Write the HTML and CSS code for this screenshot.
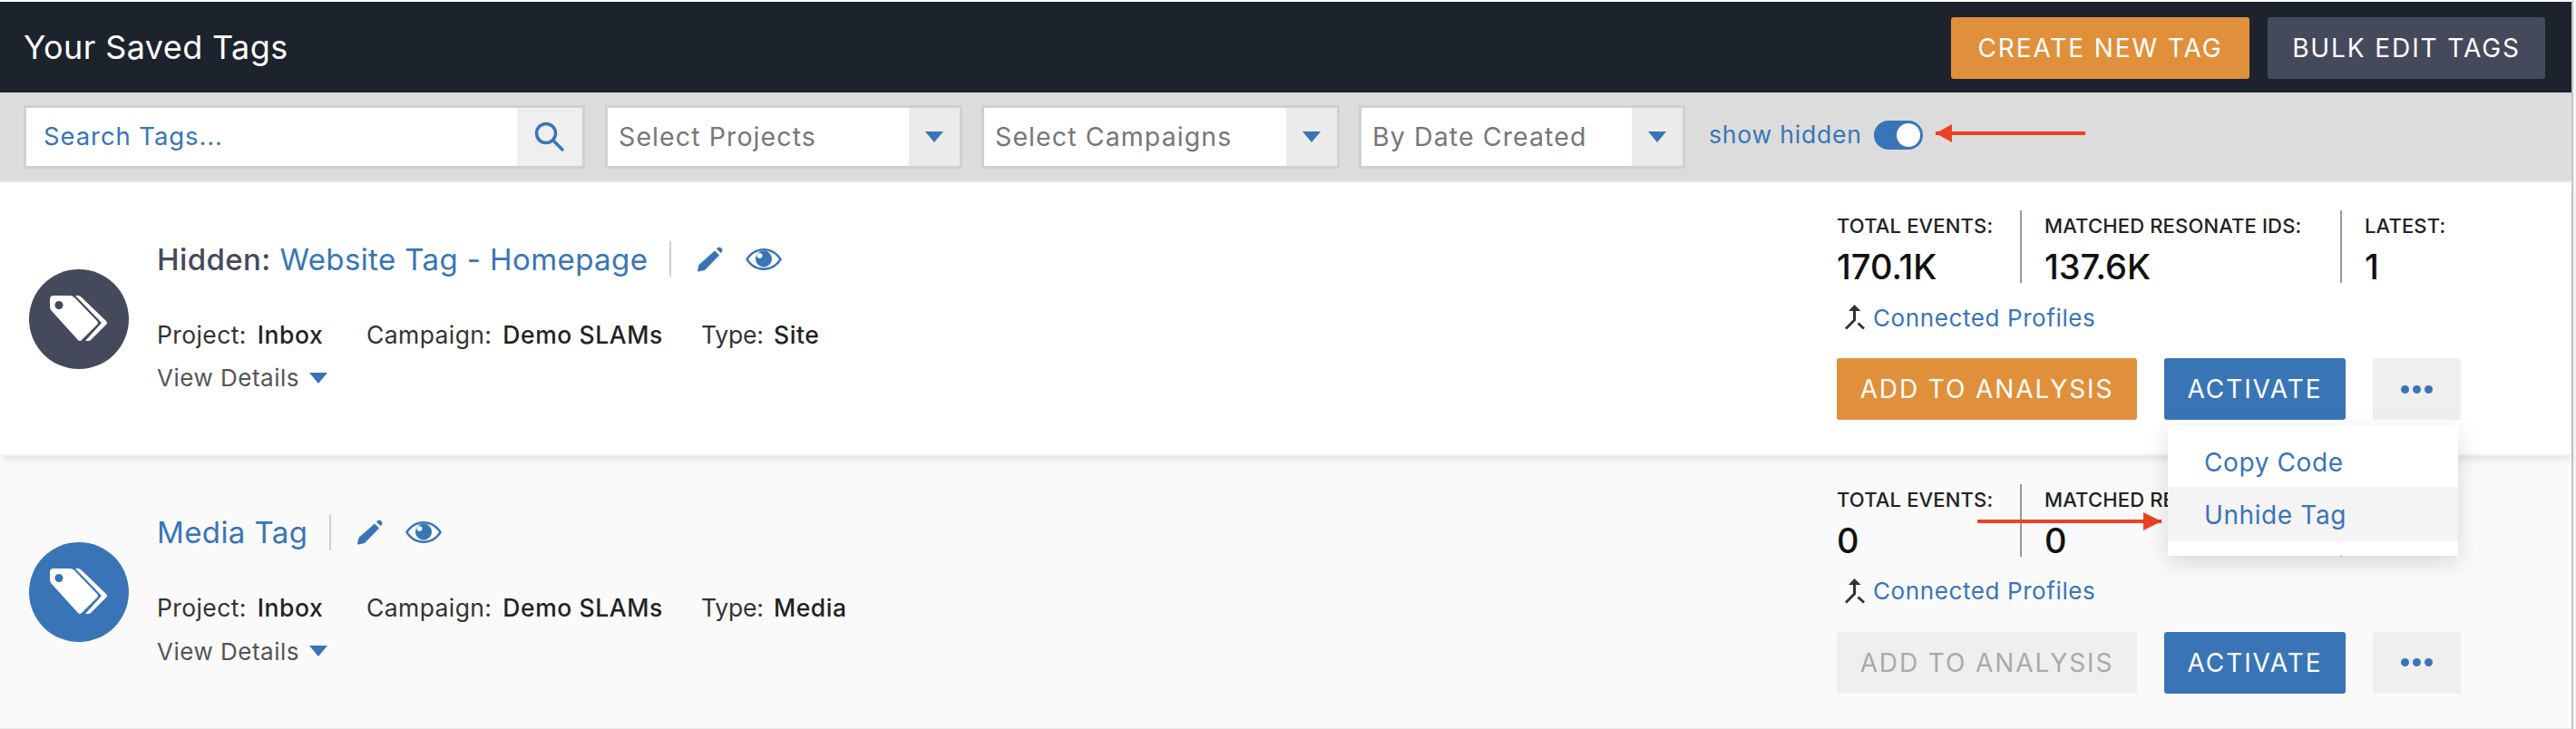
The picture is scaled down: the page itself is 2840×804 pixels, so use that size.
FILE: index.html
```html
<!DOCTYPE html>
<html lang="en">
<head>
<meta charset="utf-8">
<title>Your Saved Tags</title>
<link rel="stylesheet" href="styles.css">
</head>
<body>
<svg class="defs" width="0" height="0" aria-hidden="true">
  <symbol id="tags" viewBox="0 0 110 110">
    <path fill="#fff" fill-rule="evenodd" d="M27 29h18q3 0 5 2l25 26q2 2 0 4L58 78q-2 2-4 0L25 46q-2-2-2-5V33q0-4 4-4zM33 35a4.500 4.500 0 1 0 .01 0z"/>
    <path fill="#fff" d="M51 29h3q2 0 4 2l27 26q2 2 0 4L68 78q-1 1-3 1h-3l18-20z"/>
  </symbol>
  <symbol id="pencil" viewBox="0 0 28 28">
    <path fill="#3975b6" d="M19 4.500l5 5L8 26l-7 1.500q-1 0-1-1L1.500 20zM21 2.500l1.500-1.500q1.500-1 3 0l1.500 1.500q1 1.500 0 3l-1.500 1.500z"/>
  </symbol>
  <symbol id="eye" viewBox="0 0 40 24">
    <path fill="#3975b6" fill-rule="evenodd" d="M20 0C29 0 36 5 40 12 36 19 29 24 20 24S4 19 0 12C4 5 11 0 20 0zM20 2.500C12.500 2.500 6.500 6.500 3 12 6.500 17.500 12.500 21.500 20 21.500S33.500 17.500 37 12C33.500 6.500 27.500 2.500 20 2.500z"/>
    <path fill="#3975b6" fill-rule="evenodd" d="M20 2.500a9 9 0 1 1-.01 0zM15.500 5a3 3 0 1 0 .01 0z"/>
  </symbol>
  <symbol id="merge" viewBox="0 0 22 28">
    <path fill="#333" d="M10.500 0L17.500 7H4z"/>
    <path fill="none" stroke="#333" stroke-width="3" d="M10.500 6v11L1 26.500M14.500 20.500L21 26.500"/>
  </symbol>
  <symbol id="search" viewBox="0 0 34 34">
    <circle cx="13" cy="13" r="10.500" fill="none" stroke="#3975b6" stroke-width="3.500"/>
    <path stroke="#3975b6" stroke-width="3.500" stroke-linecap="round" d="M21 21l10 10"/>
  </symbol>
</svg>
<div class="page">
  <header class="topbar">
    <h1 class="page-title">Your Saved Tags</h1>
    <div class="top-actions">
      <button class="btn btn-orange btn-create">CREATE NEW TAG</button>
      <button class="btn btn-slate btn-bulk">BULK EDIT TAGS</button>
    </div>
  </header>
  <div class="filters">
    <div class="field field-search"><span class="field-text search-text">Search Tags...</span><span class="field-addon addon-search"><svg class="icon-search"><use href="#search"/></svg></span></div>
    <div class="field field-projects"><span class="field-text">Select Projects</span><span class="field-addon"><i class="caret"></i></span></div>
    <div class="field field-campaigns"><span class="field-text">Select Campaigns</span><span class="field-addon"><i class="caret"></i></span></div>
    <div class="field field-date"><span class="field-text">By Date Created</span><span class="field-addon"><i class="caret"></i></span></div>
    <span class="show-hidden">show hidden</span>
    <span class="toggle"><i class="knob"></i></span>
    <span class="arrow arrow-left"></span>
  </div>

  <section class="row row-first">
    <span class="badge badge-slate"><svg class="icon-tags"><use href="#tags"/></svg></span>
    <div class="info">
      <div class="title-line">
        <h2 class="tag-title"><span class="hidden-label">Hidden:</span> <a class="link">Website Tag - Homepage</a></h2>
        <span class="title-sep"></span>
        <svg class="icon-pencil"><use href="#pencil"/></svg>
        <svg class="icon-eye"><use href="#eye"/></svg>
      </div>
      <div class="meta">
        <span class="meta-item meta-project">Project: <b>Inbox</b></span>
        <span class="meta-item meta-campaign">Campaign: <b>Demo SLAMs</b></span>
        <span class="meta-item meta-type">Type: <b>Site</b></span>
      </div>
      <div class="details">View Details <i class="caret"></i></div>
    </div>
    <div class="side">
      <div class="stats">
        <div class="stat stat-total"><div class="stat-label">TOTAL EVENTS:</div><div class="stat-value">170.1K</div></div>
        <div class="stat stat-matched"><div class="stat-label">MATCHED RESONATE IDS:</div><div class="stat-value">137.6K</div></div>
        <div class="stat stat-latest"><div class="stat-label">LATEST:</div><div class="stat-value">1</div></div>
      </div>
      <div class="connected"><svg class="icon-merge"><use href="#merge"/></svg><a class="link">Connected Profiles</a></div>
      <div class="actions">
        <button class="btn btn-orange btn-add">ADD TO ANALYSIS</button>
        <button class="btn btn-blue btn-activate">ACTIVATE</button>
        <button class="btn btn-more"><i></i><i></i><i></i></button>
      </div>
    </div>
    <div class="menu">
      <div class="menu-item">Copy Code</div>
      <div class="menu-item menu-active">Unhide Tag</div>
    </div>
  </section>

  <section class="row row-second">
    <span class="badge badge-blue"><svg class="icon-tags"><use href="#tags"/></svg></span>
    <div class="info">
      <div class="title-line">
        <h2 class="tag-title"><a class="link">Media Tag</a></h2>
        <span class="title-sep"></span>
        <svg class="icon-pencil"><use href="#pencil"/></svg>
        <svg class="icon-eye"><use href="#eye"/></svg>
      </div>
      <div class="meta">
        <span class="meta-item meta-project">Project: <b>Inbox</b></span>
        <span class="meta-item meta-campaign">Campaign: <b>Demo SLAMs</b></span>
        <span class="meta-item meta-type">Type: <b>Media</b></span>
      </div>
      <div class="details">View Details <i class="caret"></i></div>
    </div>
    <div class="side">
      <div class="stats">
        <div class="stat stat-total"><div class="stat-label">TOTAL EVENTS:</div><div class="stat-value">0</div></div>
        <div class="stat stat-matched"><div class="stat-label">MATCHED RESONATE IDS:</div><div class="stat-value">0</div></div>
        <div class="stat stat-latest"><div class="stat-label">LATEST:</div><div class="stat-value">0</div></div>
      </div>
      <div class="connected"><svg class="icon-merge"><use href="#merge"/></svg><a class="link">Connected Profiles</a></div>
      <div class="actions">
        <button class="btn btn-disabled btn-add">ADD TO ANALYSIS</button>
        <button class="btn btn-blue btn-activate">ACTIVATE</button>
        <button class="btn btn-more"><i></i><i></i><i></i></button>
      </div>
    </div>
    <span class="arrow arrow-right"></span>
  </section>
</div>
</body>
</html>
```
FILE: styles.css
```css
* { box-sizing: border-box; }
html, body { margin: 0; height: 804px; overflow: hidden; background: #f5f5f5; }
body { font-family: Inter, "Noto Sans", sans-serif; }
.defs { position: absolute; }
.page { width: 2837px; height: 804px; display: flex; flex-direction: column; border-top: 2px solid #fff; border-right: 2px solid #c4c4c4; }
a.link { color: #3975b6; }

.topbar { height: 100px; background: #1c232c; display: flex; align-items: center; justify-content: space-between; padding: 0 29px 0 26px; }
.page-title { margin: 0; font-size: 36px; font-weight: 400; color: #fff; letter-spacing: .4px; }
.top-actions { display: flex; gap: 20px; margin-top: 2px; }
.btn { border: 0; border-radius: 3px; height: 68px; padding: 0; font-family: inherit; font-size: 28px; font-weight: 400; color: #fff; letter-spacing: 1.900px; display: flex; align-items: center; justify-content: center; }
.btn-orange { background: #e0903b; }
.btn-slate { background: #444a5c; }
.btn-blue { background: #3975b6; }
.btn-disabled { background: #efefef; color: #aaa; }
.btn-create { width: 329px; }
.btn-bulk { width: 306px; }

.filters { height: 98px; background: #dcdcdc; display: flex; align-items: center; padding: 0 0 0 26px; position: relative; }
.field { height: 70px; border: 3px solid #d0d0d0; background: #fff; display: flex; align-items: stretch; margin-right: 21px; }
.field-search { width: 619px; margin-right: 22px; }
.field-projects { width: 394px; }
.field-campaigns { width: 395px; }
.field-date { width: 360px; margin-right: 26px; }
.field-text { flex: 1; display: flex; align-items: center; padding: 0 0 2px 12px; font-size: 28.500px; color: #777; letter-spacing: 1.100px; }
.search-text { color: #3975b6; padding-left: 19px; font-size: 27.500px; letter-spacing: .9px; }
.field-addon { width: 56px; background: #ebebeb; display: flex; align-items: center; justify-content: center; }
.addon-search { width: 72px; background: #efefef; }
.icon-search { width: 34px; height: 34px; }
.caret { display: inline-block; width: 0; height: 0; border-left: 10.500px solid transparent; border-right: 10.500px solid transparent; border-top: 12px solid #3975b6; }
.show-hidden { font-size: 26.500px; color: #3975b6; letter-spacing: .8px; margin-top: -6px; }
.toggle { width: 54px; height: 32px; margin-left: 13px; border-radius: 16px; background: #3975b6; display: flex; align-items: center; justify-content: flex-end; padding-right: 3px; margin-top: -4px; }
.knob { width: 26px; height: 26px; border-radius: 50%; background: #fff; }

.arrow { position: absolute; height: 4px; background: #ee4023; }
.arrow::after { content: ""; position: absolute; top: -8px; border-top: 10px solid transparent; border-bottom: 10px solid transparent; }
.arrow-left { left: 2134px; top: 43px; width: 165px; }
.arrow-left::after { left: 0; border-right: 18px solid #ee4023; }
.arrow-right { left: 2180px; top: 70px; width: 203px; z-index: 3; }
.arrow-right::after { right: 0; border-left: 20px solid #ee4023; }

.row { position: relative; display: flex; align-items: center; padding-left: 32px; }
.row-first { height: 303px; background: #fff; z-index: 2; box-shadow: 0 6px 8px -2px rgba(0,0,0,.09); border-top: 2px solid #f0f0f0; border-bottom: 2px solid #f0f0f0; }
.row-second { height: 301px; background: #fafafa; border-bottom: 1px solid #eaeaea; z-index: 1; }
.badge { width: 110px; height: 110px; border-radius: 50%; display: block; flex: none; }
.badge-slate { background: #444a5c; }
.badge-blue { background: #3975b6; }
.icon-tags { width: 110px; height: 110px; display: block; }

.info { margin-left: 31px; width: 1852px; flex: none; display: flex; flex-direction: column; }
.title-line { display: flex; align-items: center; height: 40px; margin-top: -5px; }
.tag-title { margin: 0; font-size: 33px; font-weight: 400; letter-spacing: .4px; color: #444a5c; }
.hidden-label { font-weight: 500; }
.title-sep { width: 2px; height: 39px; background: #cfcfcf; margin-left: 24px; }
.icon-pencil { width: 28px; height: 28px; margin-left: 29px; }
.icon-eye { width: 40px; height: 24px; margin-left: 25px; }
.meta { margin-top: 47px; display: flex; font-size: 26.500px; color: #333; letter-spacing: .4px; height: 32px; align-items: center; }
.meta b { font-weight: 500; color: #222; margin-left: 4px; letter-spacing: .6px; }
.meta-project { width: 231px; }
.meta-campaign { width: 369px; }
.meta-type { letter-spacing: -.2px; }
.details { margin-top: 16px; font-size: 26px; color: #555; letter-spacing: .5px; display: flex; align-items: center; height: 32px; gap: 11px; }

.side { width: 810px; flex: none; display: flex; flex-direction: column; margin-top: -8px; }
.stats { display: flex; height: 80px; }
.stat { border-right: 2px solid #999; }
.stat-total { width: 204px; }
.stat-matched { width: 353px; padding-left: 25px; }
.stat-latest { padding-left: 25px; border-right: 0; }
.stat-label { font-size: 22px; font-weight: 500; color: #222; letter-spacing: .15px; line-height: 34px; white-space: nowrap; }
.stat-value { font-size: 38px; font-weight: 500; color: #111; line-height: 44px; margin-top: 6px; }
.connected { display: flex; align-items: center; height: 40px; margin-top: 18px; padding-left: 9px; font-size: 26px; letter-spacing: .6px; }
.icon-merge { width: 22px; height: 28px; margin-right: 9px; }
.actions { display: flex; margin-top: 25px; }
.btn-add { width: 331px; }
.btn-activate { width: 200px; margin-left: 30px; }
.btn-more { width: 97px; margin-left: 30px; background: #efefef; gap: 4px; }
.btn-more i { width: 9px; height: 9px; border-radius: 50%; background: #3975b6; }

.menu { position: absolute; left: 2390px; top: 267px; width: 320px; height: 144px; background: #fff; box-shadow: 0 8px 24px rgba(0,0,0,.14); padding-top: 14px; }
.menu-item { height: 54px; padding-left: 40px; display: flex; align-items: center; font-size: 28px; color: #3975b6; letter-spacing: .6px; }
.menu-active { height: 60px; background: #f4f4f4; padding-top: 2px; }
```
